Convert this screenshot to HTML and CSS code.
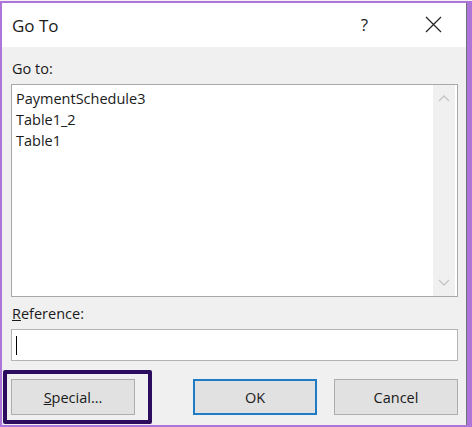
FILE: index.html
```html
<!DOCTYPE html>
<html>
<head>
<meta charset="utf-8">
<link rel="stylesheet" href="styles.css">
</head>
<body>
<div class="dialog">
  <div class="titlebar">
    <span class="title">Go To</span>
    <span class="help">?</span>
    <span class="close"><svg width="17" height="17" viewBox="0 0 17 17"><path d="M1 1 L16 16 M16 1 L1 16" stroke="#222" stroke-width="1.2" fill="none"/></svg></span>
  </div>
  <div class="content">
    <div class="label lbl-goto">Go to:</div>
    <div class="listbox">
      <div class="items">
        <div class="item">PaymentSchedule3</div>
        <div class="item">Table1_2</div>
        <div class="item">Table1</div>
      </div>
      <div class="scrollbar">
        <svg class="chev" width="12" height="8" viewBox="0 0 12 8"><path d="M1 7 L6 2 L11 7" stroke="#c4c4c4" stroke-width="1.3" fill="none"/></svg>
        <svg class="chev" width="12" height="8" viewBox="0 0 12 8"><path d="M1 1 L6 6 L11 1" stroke="#c4c4c4" stroke-width="1.3" fill="none"/></svg>
      </div>
    </div>
    <div class="label lbl-ref"><u>R</u>eference:</div>
    <div class="input"><span class="caret"></span></div>
    <div class="buttons">
      <button class="btn special"><u>S</u>pecial...</button>
      <div class="right">
        <button class="btn ok">OK</button>
        <button class="btn">Cancel</button>
      </div>
    </div>
  </div>
</div>
<div class="highlight"></div>
</body>
</html>
```
FILE: styles.css
```css
html, body {
  margin: 0;
  padding: 0;
}
body {
  width: 472px;
  height: 427px;
  background: linear-gradient(#f4f0f6 0 1px, #ad74da 1px);
  position: relative;
  overflow: hidden;
  font-family: "Open Sans", "Noto Sans", sans-serif;
  color: #1a1a1a;
}
.dialog {
  margin: 3px 5px 0 2px;
  width: 464px;
  height: 422px;
  border-right: 1px solid #6c7478;
  background: #f0f0f0;
  display: flex;
  flex-direction: column;
}
.titlebar {
  height: 44px;
  background: #ffffff;
  display: flex;
  align-items: center;
  position: relative;
}
.title {
  font-size: 17px;
  margin-left: 10px;
  margin-top: 0;
}
.help {
  font-size: 17px;
  margin-left: auto;
  margin-right: 57px;
  margin-top: -2px;
  color: #222;
}
.close {
  display: flex;
  margin-right: 24px;
  margin-top: -2px;
}
.content {
  flex: 1;
  padding: 0 8px 0 9px;
  display: flex;
  flex-direction: column;
}
.label {
  font-size: 14.5px;
  padding-left: 1px;
}
.lbl-goto {
  margin-top: 12px;
  height: 25px;
}
.listbox {
  height: 211px;
  border: 1px solid #a8a8a8;
  background: #fff;
  display: flex;
}
.items {
  flex: 1;
  padding: 3px 0 0 4px;
}
.item {
  font-size: 14.5px;
  line-height: 21px;
}
.scrollbar {
  width: 22px;
  margin-right: 2px;
  background: #f0f0f0;
  display: flex;
  flex-direction: column;
  justify-content: space-between;
  align-items: center;
  padding: 9px 0 9px;
}
.lbl-ref {
  margin-top: 7px;
  height: 25px;
}
.input {
  height: 30px;
  border: 1px solid #b4b4b4;
  background: #fff;
  display: flex;
  align-items: center;
  padding-left: 4px;
}
.caret {
  width: 1px;
  height: 19px;
  background: #000;
}
.buttons {
  margin-top: 18px;
  display: flex;
  justify-content: space-between;
}
.right {
  display: flex;
  gap: 17px;
}
.btn {
  width: 124px;
  height: 36px;
  background: #e1e1e1;
  border: 1px solid #adadad;
  font-family: "Open Sans", "Noto Sans", sans-serif;
  font-size: 14.5px;
  color: #1a1a1a;
  padding: 0;
}
.btn.ok {
  border: 2px solid #1f7cc4;
}
.highlight {
  position: absolute;
  left: 3px;
  top: 370px;
  width: 141px;
  height: 46px;
  border: 4px solid #2c0c5e;
  border-radius: 2px;
}
```
